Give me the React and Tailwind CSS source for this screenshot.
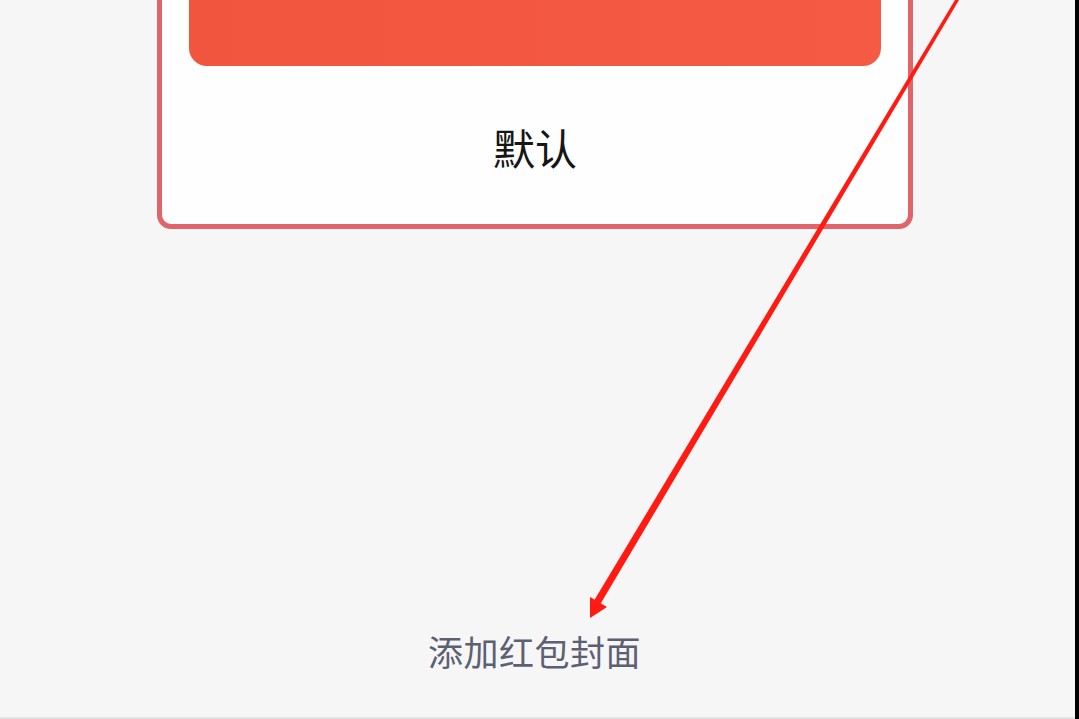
export default function App() {
  return (
    <div
      className="relative flex h-[719px] w-[1079px] overflow-hidden bg-black"
      style={{ fontFamily: '"Noto Sans CJK SC", "Noto Sans", sans-serif' }}
    >
      {/* main page */}
      <div className="flex h-[717px] w-[1075px] flex-col bg-[#f6f6f6]">
        {/* cover card */}
        <div className="ml-[157px] mt-[-200px] w-[756px] rounded-[14px] border-[5px] border-[#e2646b] bg-[#fefefe] px-[27px] pt-[27px]">
          <div className="h-[234px] rounded-[18px] bg-gradient-to-r from-[#f2553e] to-[#f45a44]" />
          <div className="flex h-[158px] items-center justify-center pt-[4px] text-[42px] leading-none text-[#161616]">
            默认
          </div>
        </div>

        <div className="mt-[404px] flex justify-center pr-[6px] text-[35px] leading-none tracking-[0.5px] text-[#5c6073]">
          添加红包封面
        </div>
      </div>

      <div className="absolute bottom-0 left-0 h-[2px] w-[1075px] bg-[#e3e3e3]" />

      {/* annotation arrow */}
      <svg
        className="pointer-events-none absolute left-0 top-0"
        width="1079"
        height="719"
        viewBox="0 0 1079 719"
      >
        <polygon points="955,0 959,0 598,608 592,604" fill="#ff1a12" />
        <polygon points="590,618 590,597 607,607" fill="#ff1a12" />
      </svg>
    </div>
  );
}
